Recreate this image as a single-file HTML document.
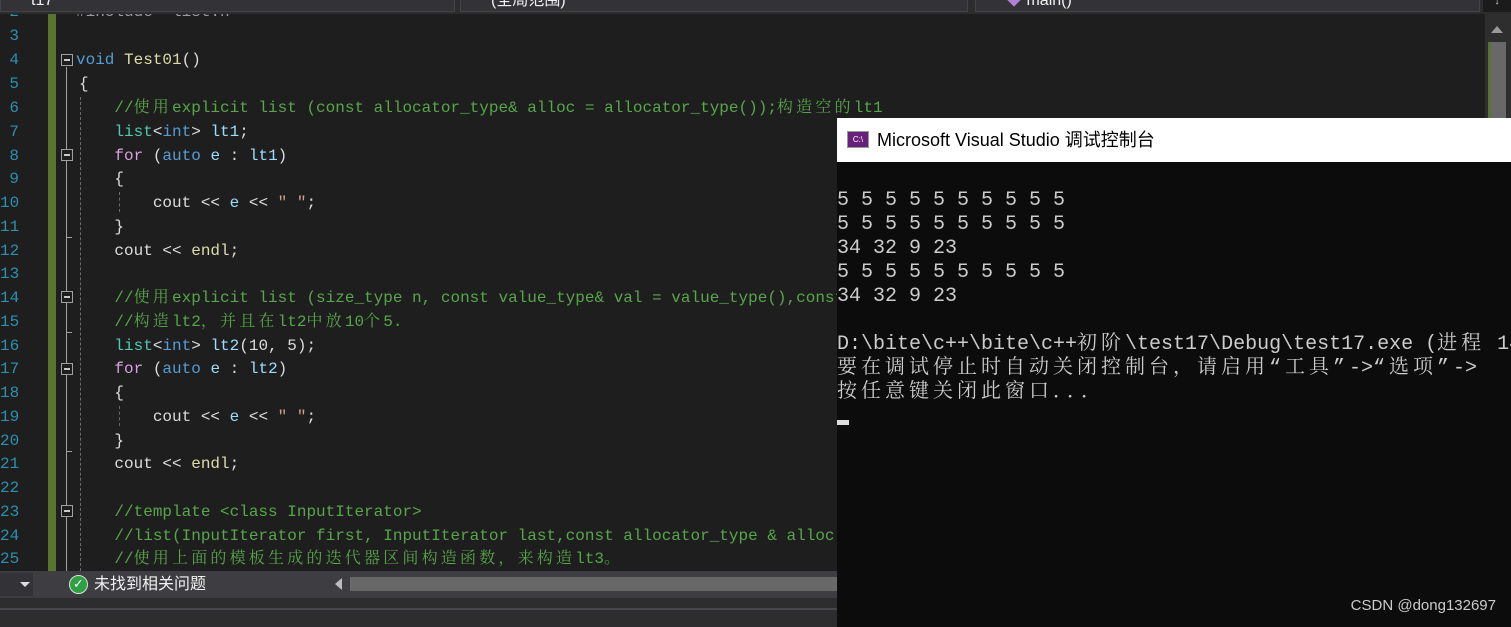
<!DOCTYPE html>
<html><head><meta charset="utf-8"><style>
*{margin:0;padding:0;box-sizing:border-box}
body{width:1511px;height:627px;background:#1e1e1e;position:relative;overflow:hidden;font-family:"Liberation Mono","Noto Serif CJK SC",monospace}
.top{position:absolute;left:0;top:0;width:1511px;height:14px;background:#2d2d30}
.dd{position:absolute;top:0;height:12px;background:#333337;border:1px solid #434346;border-top:none;color:#f1f1f1;font:16px "Liberation Sans","Noto Sans CJK SC",sans-serif;line-height:2px;overflow:hidden;padding-left:30px}
.ln{position:absolute;left:0;width:19px;text-align:right;color:#2b91af;font-size:16px;height:24px;line-height:24px}
.cl{position:absolute;left:76px;font-size:16px;height:24px;line-height:24px;white-space:pre;color:#dcdcdc}
.cm{color:#57a64a}.kw{color:#569cd6}.ct{color:#d8a0df}.ty{color:#4ec9b0}.va{color:#9cdcfe}.fn{color:#dcdcaa}.st{color:#d69d85}
.z{letter-spacing:3.2px}
.fold{position:absolute;left:61px;width:12px;height:12px;border:1px solid #a0a0a0;background:#1e1e1e}
.fold:after{content:"";position:absolute;left:2px;top:4px;width:6px;height:2px;background:#c8c8c8}
.vl{position:absolute;left:66px;width:1px;background:#a0a0a0}
.dash{position:absolute;width:0;border-left:1px dashed #6a6a6a}
.con{position:absolute;left:837px;top:118px;width:674px;height:509px;background:#0c0c0c}
.tt{position:absolute;left:0;top:0;width:674px;height:44px;background:#fff;font:18px "Liberation Sans","Noto Sans CJK SC",sans-serif;color:#000;line-height:44px;padding-left:40px}
.ico{position:absolute;left:10px;top:13px;width:22px;height:17px;background:#68217a;border:1px solid #999;color:#fff;font:8px "Liberation Sans",sans-serif;line-height:15px;text-align:center}
.co{position:absolute;left:0;font-size:20px;line-height:24px;height:24px;color:#cccccc;white-space:pre;font-family:"Liberation Mono","Noto Serif CJK SC",monospace}
.co .z{letter-spacing:4px}
</style></head><body>

<div class="ln" style="top:0">2</div>
<div class="cl" style="top:0;color:#9b9b9b">#include "list.h"</div>
<div class="top"></div>
<div class="dd" style="left:0;width:455px">t17</div>
<div class="dd" style="left:460px;width:508px">(全局范围)</div>
<div class="dd" style="left:975px;width:505px"><span style="color:#b180d7">◆</span> main()</div>

<div style="position:absolute;left:48px;top:14px;width:8px;height:557px;background:#577430"></div>

<div class="ln" style="top:24px">3</div>
<div class="ln" style="top:48px">4</div><div class="cl" style="top:48px"><span class="kw">void</span> <span class="fn">Test01</span>()</div>
<div class="ln" style="top:72px">5</div><div class="cl" style="top:72px;left:79px">{</div>
<div class="ln" style="top:96px">6</div><div class="cl" style="top:96px">    <span class="cm">//<span class="z">使用</span>explicit list (const allocator_type&amp; alloc = allocator_type());<span class="z">构造空的</span>lt1</span></div>
<div class="ln" style="top:120px">7</div><div class="cl" style="top:120px">    <span class="ty">list</span>&lt;<span class="kw">int</span>&gt; <span class="va">lt1</span>;</div>
<div class="ln" style="top:144px">8</div><div class="cl" style="top:144px">    <span class="ct">for</span> (<span class="kw">auto</span> <span class="va">e</span> : <span class="va">lt1</span>)</div>
<div class="ln" style="top:167px">9</div><div class="cl" style="top:167px">    {</div>
<div class="ln" style="top:191px">10</div><div class="cl" style="top:191px">        cout &lt;&lt; <span class="va">e</span> &lt;&lt; <span class="st">" "</span>;</div>
<div class="ln" style="top:215px">11</div><div class="cl" style="top:215px">    }</div>
<div class="ln" style="top:239px">12</div><div class="cl" style="top:239px">    cout &lt;&lt; <span class="fn">endl</span>;</div>
<div class="ln" style="top:262px">13</div>
<div class="ln" style="top:286px">14</div><div class="cl" style="top:286px">    <span class="cm">//<span class="z">使用</span>explicit list (size_type n, const value_type&amp; val = value_type(),const allocator_type&amp; alloc</span></div>
<div class="ln" style="top:310px">15</div><div class="cl" style="top:310px">    <span class="cm">//<span class="z">构造</span>lt2<span class="z">，并且在</span>lt2<span class="z">中放</span>10<span class="z">个</span>5.</span></div>
<div class="ln" style="top:334px">16</div><div class="cl" style="top:334px">    <span class="ty">list</span>&lt;<span class="kw">int</span>&gt; <span class="va">lt2</span>(10, 5);</div>
<div class="ln" style="top:357px">17</div><div class="cl" style="top:357px">    <span class="ct">for</span> (<span class="kw">auto</span> <span class="va">e</span> : <span class="va">lt2</span>)</div>
<div class="ln" style="top:381px">18</div><div class="cl" style="top:381px">    {</div>
<div class="ln" style="top:405px">19</div><div class="cl" style="top:405px">        cout &lt;&lt; <span class="va">e</span> &lt;&lt; <span class="st">" "</span>;</div>
<div class="ln" style="top:429px">20</div><div class="cl" style="top:429px">    }</div>
<div class="ln" style="top:452px">21</div><div class="cl" style="top:452px">    cout &lt;&lt; <span class="fn">endl</span>;</div>
<div class="ln" style="top:476px">22</div>
<div class="ln" style="top:500px">23</div><div class="cl" style="top:500px">    <span class="cm">//template &lt;class InputIterator&gt;</span></div>
<div class="ln" style="top:524px">24</div><div class="cl" style="top:524px">    <span class="cm">//list(InputIterator first, InputIterator last,const allocator_type &amp; alloc = allocator_type());</span></div>
<div class="ln" style="top:547px">25</div><div class="cl" style="top:547px">    <span class="cm">//<span class="z">使用上面的模板生成的迭代器区间构造函数，来构造</span>lt3<span class="z">。</span></span></div>

<div class="vl" style="top:67px;height:504px"></div>
<div class="dash" style="left:80px;top:97px;height:474px"></div>
<div class="dash" style="left:119px;top:192px;height:20px"></div>
<div class="dash" style="left:119px;top:406px;height:20px"></div>
<div style="position:absolute;left:66px;top:237px;width:6px;height:1px;background:#a0a0a0"></div>
<div style="position:absolute;left:66px;top:332px;width:6px;height:1px;background:#a0a0a0"></div>
<div style="position:absolute;left:66px;top:451px;width:6px;height:1px;background:#a0a0a0"></div>
<div class="fold" style="top:54px"></div>
<div class="fold" style="top:149px"></div>
<div class="fold" style="top:291px"></div>
<div class="fold" style="top:363px"></div>
<div class="fold" style="top:505px"></div>

<div style="position:absolute;left:1485px;top:14px;width:26px;height:104px;background:#2e2e2e"></div>
<div style="position:absolute;left:1491px;top:26px;width:0;height:0;border-left:6px solid transparent;border-right:6px solid transparent;border-bottom:7px solid #999"></div>
<div style="position:absolute;left:1488px;top:42px;width:18px;height:76px;background:#686868"></div>
<div style="position:absolute;left:1488px;top:42px;width:3px;height:76px;background:#577430"></div>
<div style="position:absolute;left:1483px;top:0;width:28px;height:12px;background:#1b1b1c;color:#ddd;font-size:10px;text-align:center;line-height:6px">↓</div>

<div style="position:absolute;left:0;top:571px;width:837px;height:27px;background:#3e3e42"></div>
<div style="position:absolute;left:0;top:573px;width:33px;height:23px;background:#333337"></div>
<div style="position:absolute;left:20px;top:582px;width:0;height:0;border-left:5px solid transparent;border-right:5px solid transparent;border-top:5px solid #ddd"></div>
<div style="position:absolute;left:69px;top:575px;width:19px;height:19px;border-radius:50%;background:#2ea043;border:1px solid #ddd;color:#fff;font:bold 13px 'DejaVu Sans',sans-serif;text-align:center;line-height:17px">✓</div>
<div style="position:absolute;left:94px;top:573px;color:#f1f1f1;font:16px 'Liberation Sans','Noto Sans CJK SC',sans-serif;line-height:24px">未找到相关问题</div>
<div style="position:absolute;left:335px;top:578px;width:0;height:0;border-top:6px solid transparent;border-bottom:6px solid transparent;border-right:7px solid #bbb"></div>
<div style="position:absolute;left:350px;top:577px;width:487px;height:14px;background:#686868"></div>
<div style="position:absolute;left:0;top:598px;width:837px;height:29px;background:#2d2d30"></div>
<div style="position:absolute;left:0;top:608px;width:837px;height:2px;background:#45454a"></div>

<div class="con">
<div class="tt"><div class="ico">C:\</div>Microsoft Visual Studio 调试控制台</div>
<div class="co" style="top:71px">5 5 5 5 5 5 5 5 5 5</div>
<div class="co" style="top:95px">5 5 5 5 5 5 5 5 5 5</div>
<div class="co" style="top:119px">34 32 9 23</div>
<div class="co" style="top:143px">5 5 5 5 5 5 5 5 5 5</div>
<div class="co" style="top:167px">34 32 9 23</div>
<div class="co" style="top:215px">D:\bite\c++\bite\c++<span class="z">初阶</span>\test17\Debug\test17.exe (<span class="z">进程</span> 14</div>
<div class="co" style="top:239px"><span class="z">要在调试停止时自动关闭控制台，请启用“工具”</span>-&gt;<span class="z">“选项”</span>-&gt;</div>
<div class="co" style="top:263px"><span class="z">按任意键关闭此窗口．．．</span></div>
<div style="position:absolute;left:0;top:302px;width:12px;height:5px;background:#ddd"></div>
<div style="position:absolute;right:15px;top:479px;color:#ccc;font:15px 'Liberation Sans',sans-serif">CSDN @dong132697</div>
</div>
</body></html>
